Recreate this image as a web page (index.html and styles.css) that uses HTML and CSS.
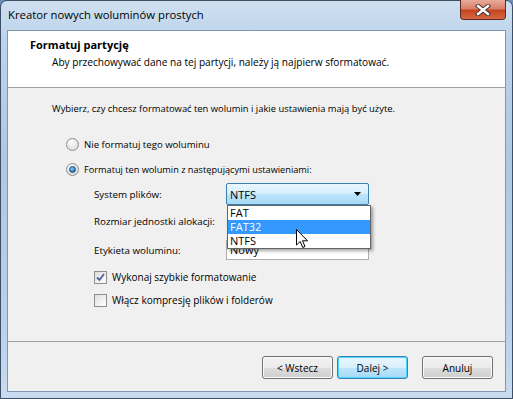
FILE: index.html
```html
<!DOCTYPE html>
<html lang="pl">
<head>
  <meta charset="UTF-8" />
  <title>Kreator nowych woluminów prostych</title>
  <link rel="stylesheet" href="styles.css">
</head>
<body>
  <div class="window">
    <div class="titlebar">
      <span class="title">Kreator nowych woluminów prostych</span>
      <div class="close">
        <svg width="16" height="12" viewBox="0 0 16 12">
          <path d="M3 2 L13 10 M13 2 L3 10" stroke="#3b2a2a" stroke-width="4.2" stroke-linecap="square"/>
          <path d="M3 2 L13 10 M13 2 L3 10" stroke="#fff" stroke-width="2.4" stroke-linecap="square"/>
        </svg>
      </div>
    </div>

    <div class="client">
      <div class="header">
        <div class="h-title">Formatuj partycję</div>
        <div class="h-sub">Aby przechowywać dane na tej partycji, należy ją najpierw sformatować.</div>
      </div>

      <div class="body">
        <div class="row intro">Wybierz, czy chcesz formatować ten wolumin i jakie ustawienia mają być użyte.</div>

        <div class="row opt r1"><span class="radio"></span>Nie formatuj tego woluminu</div>
        <div class="row opt r2"><span class="radio on"></span>Formatuj ten wolumin z następującymi ustawieniami:</div>

        <div class="row field f1">
          <span class="lbl">System plików:</span>
          <div class="combo">
            <span>NTFS</span>
            <svg class="arrow" width="8" height="4" viewBox="0 0 8 4"><path d="M0 0 H7 L3.5 4 Z" fill="#000"/></svg>
            <ul class="list">
              <li>FAT</li>
              <li class="sel">FAT32</li>
              <li>NTFS</li>
            </ul>
          </div>
        </div>
        <div class="row field f2">
          <span class="lbl">Rozmiar jednostki alokacji:</span>
        </div>
        <div class="row field f3">
          <span class="lbl">Etykieta woluminu:</span>
          <div class="textbox">Nowy</div>
        </div>

        <div class="row chk c1"><span class="check on"><svg width="9" height="9" viewBox="0 0 9 9"><path d="M1 4.5 L3.5 7 L8 1" fill="none" stroke="#4a5f97" stroke-width="1.8"/></svg></span>Wykonaj szybkie formatowanie</div>
        <div class="row chk c2"><span class="check"></span>Włącz kompresję plików i folderów</div>

        <svg class="cursor" width="13" height="20" viewBox="0 0 13 20">
          <path d="M0.5 0.5 V16 L4.2 12.5 L6.8 18.5 L9 17.5 L6.5 11.8 L11.5 11.8 Z" fill="#fff" stroke="#000" stroke-width="1" stroke-linejoin="miter"/>
        </svg>
      </div>

      <div class="footer">
        <button class="btn">&lt; Wstecz</button>
        <button class="btn default">Dalej &gt;</button>
        <button class="btn cancel">Anuluj</button>
      </div>
    </div>
  </div>
</body>
</html>
```

FILE: styles.css
```css
body { margin: 0; padding: 0; font-family: "Open Sans", "Noto Sans", sans-serif; font-size: 10px; color: #000; background: #6d8db4; }

.window {
  width: 513px; height: 399px; box-sizing: border-box;
  border: 1px solid #3d4f66; border-radius: 7px 7px 0 0;
  background: linear-gradient(180deg, #cfe0f1 0%, #bcd3ea 10%, #aec8e4 40%, #b8d0ea 80%, #c9dbef 100%);
  display: flex; flex-direction: column;
}

.titlebar { height: 29px; display: flex; align-items: flex-start; position: relative; }
.title { margin: 6px 0 0 7px; font-size: 11.3px; line-height: 16px; }
.close {
  position: absolute; right: 6px; top: -1px; width: 46px; height: 20px;
  border: 1px solid #5c2a25; border-top: none; border-radius: 0 0 4px 4px;
  background: linear-gradient(180deg, #e9ab9b 0%, #d98069 45%, #c4441f 55%, #d56a43 100%);
  display: flex; justify-content: center; align-items: center; box-sizing: border-box;
}

.client {
  margin: 0 6px 6px 6px; flex: 1;
  border: 1px solid #8197b0; background: #f0f0f0;
  display: flex; flex-direction: column;
}

.header { height: 57px; background: #fff; border-bottom: 1px solid #a0a0a0; box-sizing: border-box; }
.h-title { font-weight: bold; font-size: 11px; margin: 6px 0 0 22px; line-height: 16px; }
.h-sub { font-size: 10.1px; margin: 1px 0 0 44px; line-height: 16px; }

.body { height: 254px; position: relative; padding-left: 44px; border-bottom: 1px solid #a0a0a0; box-sizing: border-box; }
.row { display: flex; align-items: center; height: 20px; white-space: nowrap; }
.intro { margin-top: 10px; font-size: 9.4px; }
.opt { margin-left: 14px; font-size: 9.6px; }
.r1 { margin-top: 16px; }
.r2 { margin-top: 5px; font-size: 9.2px; }
.field { margin-left: 42px; height: 22px; }
.f1 { margin-top: 4px; }
.f2 { margin-top: 5px; }
.f3 { margin-top: 7px; }
.chk { margin-left: 42px; }
.c1 { margin-top: 6px; }
.c2 { margin-top: 3px; }

.lbl { width: 132px; flex: none; font-size: 9.8px; }

.radio {
  width: 11px; height: 11px; border-radius: 50%; margin-right: 5px; flex: none;
  border: 1px solid #8e8f8f; background: radial-gradient(circle at 40% 35%, #fff 0%, #e3e3e3 60%, #cfcfcf 100%);
  display: inline-flex; justify-content: center; align-items: center;
}
.radio.on::after {
  content: ""; width: 5px; height: 5px; border-radius: 50%;
  background: radial-gradient(circle at 40% 35%, #9ed3f6 0%, #2f7ec3 60%, #1c4f86 100%);
  border: 1px solid #1f4f7e;
}

.check {
  width: 11px; height: 11px; margin-right: 5px; border: 1px solid #8e8f8f; flex: none;
  background: linear-gradient(135deg, #dcdcdc 0%, #f3f3f3 60%, #fff 100%);
  display: inline-flex; justify-content: center; align-items: center;
}

.combo {
  width: 143px; height: 22px; box-sizing: border-box; position: relative;
  border: 1px solid #3c7fb1; border-radius: 2px;
  background: linear-gradient(180deg, #eaf6fd 0%, #d9f0fc 45%, #bee6fd 50%, #a7d9f5 100%);
  display: flex; align-items: center; padding-left: 3px; font-size: 11px; z-index: 2;
}
.combo .arrow { position: absolute; right: 6px; top: 8px; }

.list {
  position: absolute; left: 0; top: 21px; width: 144px; margin: 0; padding: 0;
  list-style: none; background: #fff; border: 1px solid #646464; box-sizing: border-box;
  box-shadow: 2px 2px 3px rgba(0,0,0,0.35); font-size: 11px;
}
.list li { height: 14px; line-height: 14px; padding-left: 2px; }
.list li.sel { background: #3399ff; color: #fff; }

.textbox {
  width: 143px; height: 20px; box-sizing: border-box; background: #fff;
  border: 1px solid #abadb3; padding-left: 3px; line-height: 18px; font-size: 11px;
}

.cursor { position: absolute; left: 288px; top: 141px; z-index: 3; }

.footer { flex: 1; display: flex; align-items: flex-start; padding: 14px 0 0 254px; }
.btn {
  width: 71px; height: 23px; font-family: inherit; font-size: 10px; color: #000;
  border: 1px solid #707070; border-radius: 3px; padding: 0;
  background: linear-gradient(180deg, #f2f2f2 0%, #ebebeb 50%, #dddddd 51%, #cfcfcf 100%);
  box-shadow: inset 0 0 0 1px #fcfcfc;
}
.btn.default {
  margin-left: 4px; border-color: #3c7fb1;
  background: linear-gradient(180deg, #eaf6fd 0%, #d9f0fc 50%, #bee6fd 51%, #a7d9f5 100%);
  box-shadow: inset 0 0 0 1px #48d8fb;
}
.btn.cancel { margin-left: 14px; }
```
